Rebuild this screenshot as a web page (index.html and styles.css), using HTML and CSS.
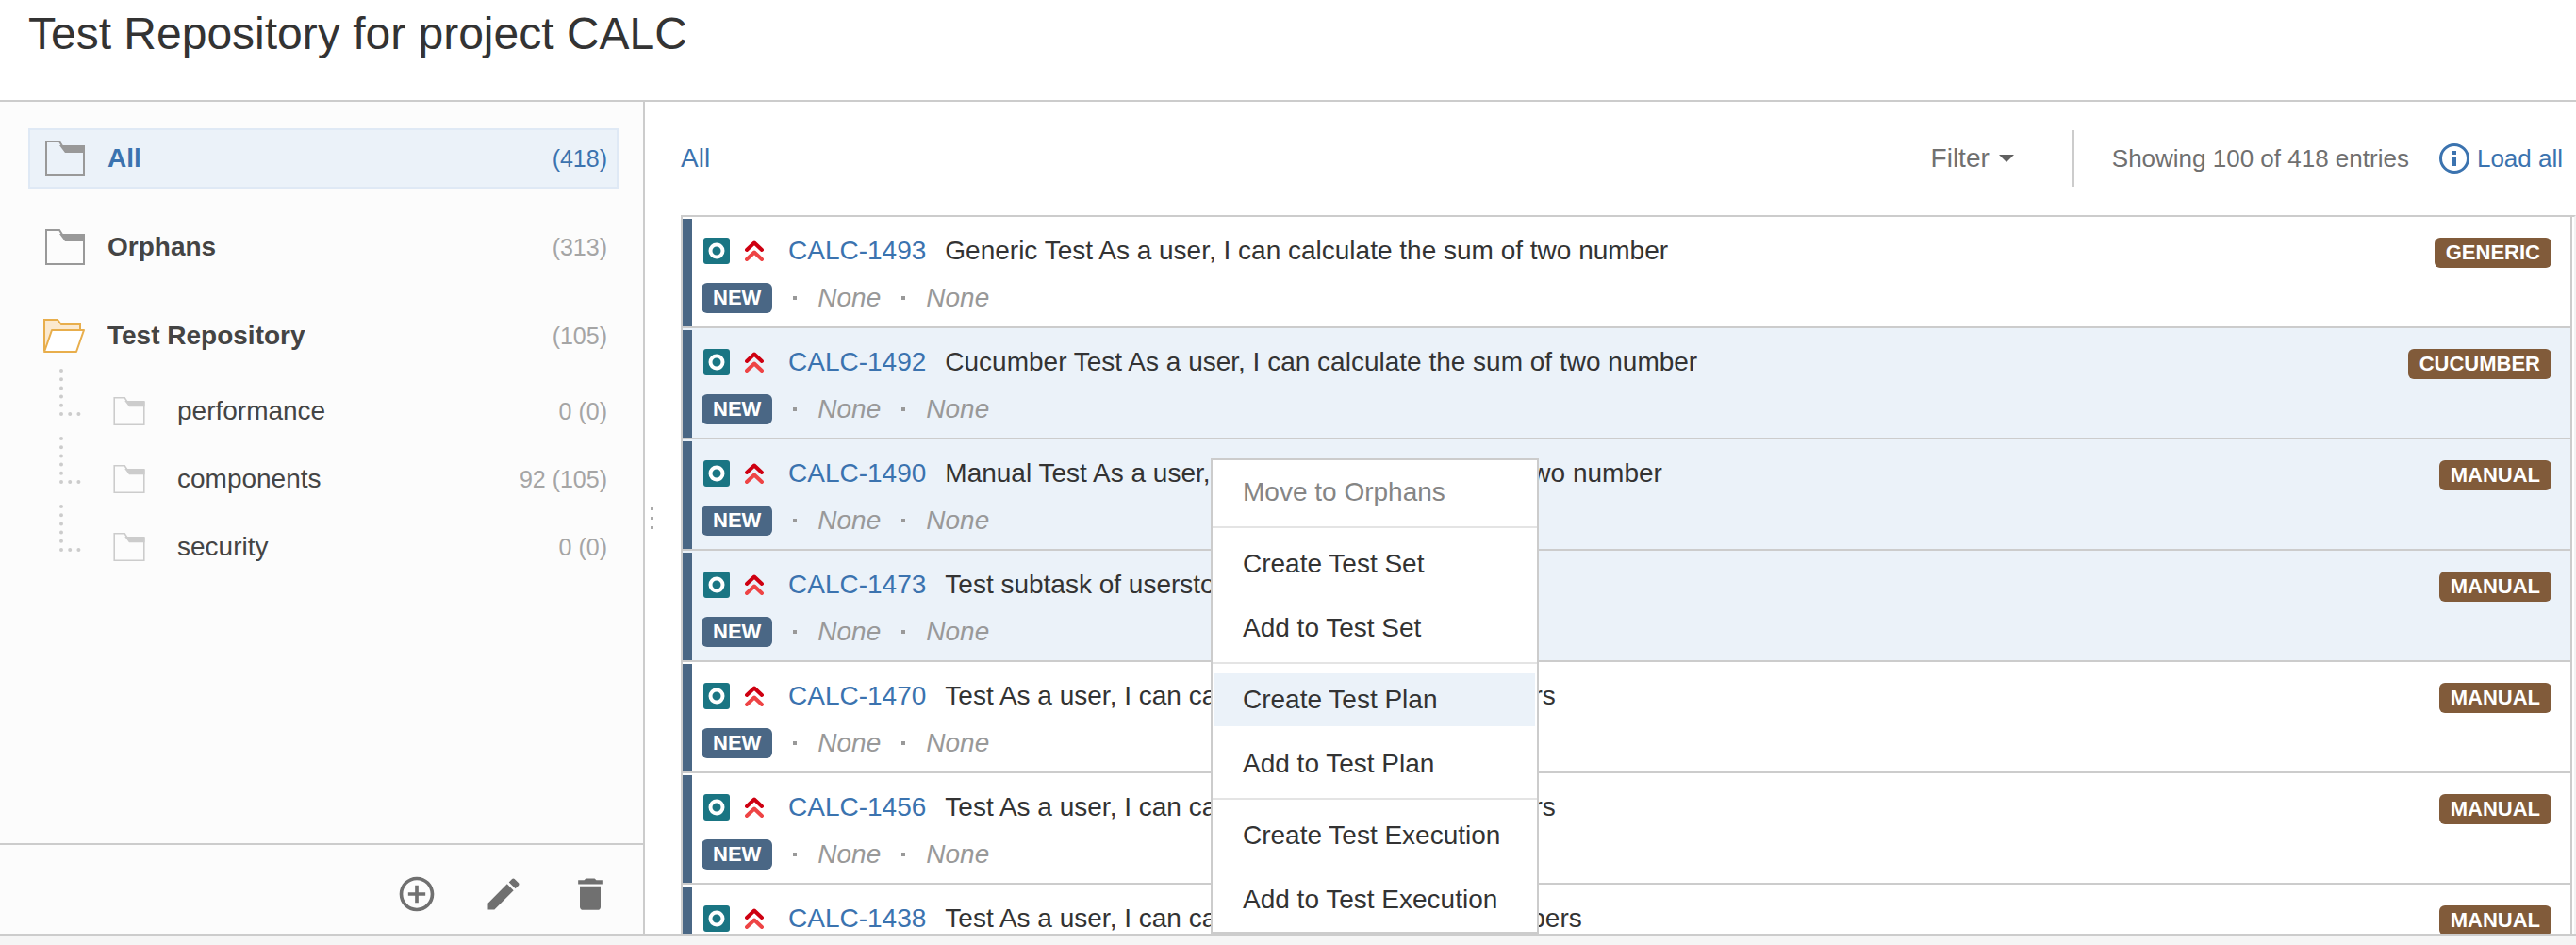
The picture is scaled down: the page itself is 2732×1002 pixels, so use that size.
FILE: index.html
```html
<!DOCTYPE html>
<html lang="en">
<head>
    <meta charset="UTF-8">
    <meta name="viewport" content="width=device-width, initial-scale=1.0">
    <title>Test Repository</title>
    <link rel="stylesheet" href="styles.css">
</head>
<body>
    <!-- shared icons -->
    <svg class="icon-defs" aria-hidden="true">
        <symbol id="icon-folder" viewBox="0 0 42 38">
            <path d="M15 5 H42 V13 H21 Z" fill="currentColor"/>
            <path d="M41 6 V37 H1 V1 H15 L22 12" fill="none" stroke="currentColor" stroke-width="2"/>
        </symbol>
        <symbol id="icon-folder-open" viewBox="0 0 44 36">
            <path d="M1 34 V1 H15 L19 6 H39 V12" fill="#fbe9cf" stroke="#e8ae4c" stroke-width="2"/>
            <path d="M9 12 H43 L35 35 H1 Z" fill="#fff" stroke="#e8ae4c" stroke-width="2" stroke-linejoin="round"/>
        </symbol>
        <symbol id="icon-branch" viewBox="0 0 24 52">
            <path d="M3 3 V49 H23" fill="none" stroke="#ccc" stroke-width="4" stroke-linecap="round" stroke-dasharray="0 9.2"/>
        </symbol>
        <symbol id="icon-test" viewBox="0 0 28 28">
            <rect width="28" height="28" rx="3" fill="#1a7583"/>
            <circle cx="14" cy="14" r="6.5" fill="none" stroke="#fff" stroke-width="4"/>
        </symbol>
        <symbol id="icon-priority" viewBox="0 0 20 22">
            <path d="M2 20 L10 12.5 L18 20" fill="none" stroke="#ee4445" stroke-width="4" stroke-linecap="round" stroke-linejoin="round"/>
            <path d="M2 10 L10 2.5 L18 10" fill="none" stroke="#ce0011" stroke-width="4" stroke-linecap="round" stroke-linejoin="round"/>
        </symbol>
    </svg>

    <header class="page-header">
        <h1>Test Repository for project CALC</h1>
    </header>

    <div class="content">
        <aside class="sidebar">
            <nav class="folders">
                <a href="#" class="folder selected">
                    <svg class="folder-icon"><use href="#icon-folder"/></svg>
                    <span class="folder-name">All</span>
                    <span class="count">(418)</span>
                </a>
                <a href="#" class="folder">
                    <svg class="folder-icon"><use href="#icon-folder"/></svg>
                    <span class="folder-name">Orphans</span>
                    <span class="count">(313)</span>
                </a>
                <a href="#" class="folder">
                    <svg class="folder-icon open"><use href="#icon-folder-open"/></svg>
                    <span class="folder-name">Test Repository</span>
                    <span class="count">(105)</span>
                </a>
                <div class="subfolders">
                    <a href="#" class="subfolder">
                        <svg class="branch"><use href="#icon-branch"/></svg>
                        <svg class="subfolder-icon"><use href="#icon-folder"/></svg>
                        <span class="folder-name">performance</span>
                        <span class="count">0 (0)</span>
                    </a>
                    <a href="#" class="subfolder">
                        <svg class="branch"><use href="#icon-branch"/></svg>
                        <svg class="subfolder-icon"><use href="#icon-folder"/></svg>
                        <span class="folder-name">components</span>
                        <span class="count">92 (105)</span>
                    </a>
                    <a href="#" class="subfolder">
                        <svg class="branch"><use href="#icon-branch"/></svg>
                        <svg class="subfolder-icon"><use href="#icon-folder"/></svg>
                        <span class="folder-name">security</span>
                        <span class="count">0 (0)</span>
                    </a>
                </div>
            </nav>
            <div class="sidebar-tools">
                <button type="button" aria-label="Add folder">
                    <svg width="44" height="44" viewBox="0 0 24 24" fill="currentColor"><path d="M13 7h-2v4H7v2h4v4h2v-4h4v-2h-4V7zm-1-5C6.48 2 2 6.48 2 12s4.480 10 10 10 10-4.480 10-10S17.520 2 12 2zm0 18c-4.410 0-8-3.590-8-8s3.590-8 8-8 8 3.590 8 8-3.590 8-8 8z"/></svg>
                </button>
                <button type="button" aria-label="Edit folder">
                    <svg width="44" height="44" viewBox="0 0 24 24" fill="currentColor"><path d="M3 17.250V21h3.750L17.810 9.940l-3.750-3.750L3 17.250zM20.710 7.040c.39-.39.39-1.020 0-1.410l-2.340-2.340c-.39-.39-1.020-.39-1.410 0l-1.830 1.830 3.750 3.750 1.830-1.830z"/></svg>
                </button>
                <button type="button" aria-label="Delete folder">
                    <svg width="44" height="44" viewBox="0 0 24 24" fill="currentColor"><path d="M6 19.500c0 1.100.9 1.700 1.700 1.700h8.600c1 0 1.700-.7 1.700-1.700V7.500H6v12zM19 4h-3.500l-1-1h-5l-1 1H5v2.300h14V4z"/></svg>
                </button>
            </div>
        </aside>

        <main class="main">
            <div class="splitter"><i></i><i></i><i></i></div>
            <div class="toolbar">
                <a href="#" class="breadcrumb">All</a>
                <button type="button" class="filter">Filter <span class="caret"></span></button>
                <div class="paging">
                    <span>Showing 100 of 418 entries</span>
                    <a href="#" class="load-all">
                        <svg width="32" height="32" viewBox="0 0 32 32" fill="currentColor">
                            <circle cx="16" cy="16" r="14.5" fill="none" stroke="currentColor" stroke-width="3"/>
                            <rect x="14" y="8" width="4" height="4"/>
                            <rect x="14" y="14" width="4" height="10"/>
                        </svg>
                        Load all
                    </a>
                </div>
            </div>

            <ul class="tests">
                <li class="test">
                    <div class="test-body">
                        <div class="test-line">
                            <svg class="test-icon"><use href="#icon-test"/></svg>
                            <svg class="priority-icon"><use href="#icon-priority"/></svg>
                            <a href="#" class="test-key">CALC-1493</a>
                            <span class="summary">Generic Test As a user, I can calculate the sum of two number</span>
                        </div>
                        <div class="test-meta"><span class="badge status">NEW</span><i class="dot"></i><em>None</em><i class="dot"></i><em>None</em></div>
                    </div>
                    <span class="badge type">GENERIC</span>
                </li>
                <li class="test selected">
                    <div class="test-body">
                        <div class="test-line">
                            <svg class="test-icon"><use href="#icon-test"/></svg>
                            <svg class="priority-icon"><use href="#icon-priority"/></svg>
                            <a href="#" class="test-key">CALC-1492</a>
                            <span class="summary">Cucumber Test As a user, I can calculate the sum of two number</span>
                        </div>
                        <div class="test-meta"><span class="badge status">NEW</span><i class="dot"></i><em>None</em><i class="dot"></i><em>None</em></div>
                    </div>
                    <span class="badge type">CUCUMBER</span>
                </li>
                <li class="test selected">
                    <div class="test-body">
                        <div class="test-line">
                            <svg class="test-icon"><use href="#icon-test"/></svg>
                            <svg class="priority-icon"><use href="#icon-priority"/></svg>
                            <a href="#" class="test-key">CALC-1490</a>
                            <span class="summary">Manual Test As a user, I can calculate the sum of two number</span>
                        </div>
                        <div class="test-meta"><span class="badge status">NEW</span><i class="dot"></i><em>None</em><i class="dot"></i><em>None</em></div>
                    </div>
                    <span class="badge type">MANUAL</span>
                </li>
                <li class="test selected">
                    <div class="test-body">
                        <div class="test-line">
                            <svg class="test-icon"><use href="#icon-test"/></svg>
                            <svg class="priority-icon"><use href="#icon-priority"/></svg>
                            <a href="#" class="test-key">CALC-1473</a>
                            <span class="summary">Test subtask of userstory</span>
                        </div>
                        <div class="test-meta"><span class="badge status">NEW</span><i class="dot"></i><em>None</em><i class="dot"></i><em>None</em></div>
                    </div>
                    <span class="badge type">MANUAL</span>
                </li>
                <li class="test">
                    <div class="test-body">
                        <div class="test-line">
                            <svg class="test-icon"><use href="#icon-test"/></svg>
                            <svg class="priority-icon"><use href="#icon-priority"/></svg>
                            <a href="#" class="test-key">CALC-1470</a>
                            <span class="summary">Test As a user, I can calculate the sum of 2 numbers</span>
                        </div>
                        <div class="test-meta"><span class="badge status">NEW</span><i class="dot"></i><em>None</em><i class="dot"></i><em>None</em></div>
                    </div>
                    <span class="badge type">MANUAL</span>
                </li>
                <li class="test">
                    <div class="test-body">
                        <div class="test-line">
                            <svg class="test-icon"><use href="#icon-test"/></svg>
                            <svg class="priority-icon"><use href="#icon-priority"/></svg>
                            <a href="#" class="test-key">CALC-1456</a>
                            <span class="summary">Test As a user, I can calculate the sum of 2 numbers</span>
                        </div>
                        <div class="test-meta"><span class="badge status">NEW</span><i class="dot"></i><em>None</em><i class="dot"></i><em>None</em></div>
                    </div>
                    <span class="badge type">MANUAL</span>
                </li>
                <li class="test">
                    <div class="test-body">
                        <div class="test-line">
                            <svg class="test-icon"><use href="#icon-test"/></svg>
                            <svg class="priority-icon"><use href="#icon-priority"/></svg>
                            <a href="#" class="test-key">CALC-1438</a>
                            <span class="summary">Test As a user, I can calculate the sum of two numbers</span>
                        </div>
                    </div>
                    <span class="badge type">MANUAL</span>
                </li>
            </ul>

            <div class="context-menu">
                <div class="menu-group">
                    <button type="button" disabled>Move to Orphans</button>
                </div>
                <div class="menu-group">
                    <button type="button">Create Test Set</button>
                    <button type="button">Add to Test Set</button>
                </div>
                <div class="menu-group">
                    <button type="button" class="active">Create Test Plan</button>
                    <button type="button">Add to Test Plan</button>
                </div>
                <div class="menu-group">
                    <button type="button">Create Test Execution</button>
                    <button type="button">Add to Test Execution</button>
                </div>
            </div>
        </main>
    </div>

    <footer class="page-footer"></footer>
</body>
</html>
```
FILE: styles.css
```css
* {
    margin: 0;
    padding: 0;
    box-sizing: border-box;
}

body {
    display: flex;
    flex-direction: column;
    height: 100vh;
    overflow: hidden;
    background-color: #fff;
    color: #333;
    font-family: Arial, "Liberation Sans", sans-serif;
    font-size: 28px;
    line-height: 32px;
}

a {
    color: #3b73af;
    text-decoration: none;
}

button {
    border: none;
    background: none;
    color: inherit;
    font: inherit;
    cursor: pointer;
}

svg {
    flex-shrink: 0;
}

.icon-defs {
    position: absolute;
    width: 0;
    height: 0;
}

.page-header {
    flex: none;
    height: 108px;
    padding: 8px 30px;
    border-bottom: 2px solid #ccc;
}

.page-header h1 {
    font-size: 48px;
    font-weight: normal;
    line-height: 56px;
}

.content {
    display: flex;
    flex: 1;
    min-height: 0;
}

.page-footer {
    flex: none;
    height: 12px;
    border-top: 2px solid #ccc;
    background-color: #f5f5f5;
}

/* Sidebar */
.sidebar {
    display: flex;
    flex-direction: column;
    flex: none;
    width: 684px;
    border-right: 2px solid #ccc;
    background-color: #fcfcfc;
}

.folders {
    flex: 1;
    padding: 28px 26px 0 30px;
}

.folder {
    display: flex;
    align-items: center;
    height: 64px;
    margin-bottom: 30px;
    padding: 0 10px 0 16px;
    border: 2px solid transparent;
    color: #444;
    font-weight: bold;
}

.folder.selected {
    border-color: #dfe9f5;
    background-color: #ebf2f9;
    color: #3b73af;
}

.folder-icon {
    width: 42px;
    height: 38px;
    margin-right: 24px;
    color: #999;
}

.folder-icon.open {
    width: 44px;
    height: 36px;
    margin-left: -2px;
}

.folder-name {
    flex: 1;
}

.count {
    color: #a5a5a5;
    font-size: 25px;
    font-weight: normal;
}

.selected .count {
    color: #3b73af;
}

.subfolders {
    margin-top: -18px;
}

.subfolder {
    display: flex;
    align-items: center;
    height: 72px;
    padding: 0 12px 0 32px;
    color: #444;
}

.branch {
    align-self: flex-start;
    width: 24px;
    height: 52px;
    margin-top: -10px;
}

.subfolder-icon {
    width: 34px;
    height: 30px;
    margin: 0 34px;
    color: #ccc;
}

.sidebar-tools {
    display: flex;
    flex: none;
    justify-content: flex-end;
    align-items: center;
    gap: 48px;
    height: 96px;
    padding: 10px 34px 0;
    border-top: 2px solid #ccc;
    color: #707070;
}

.sidebar-tools button {
    display: flex;
}

/* Main panel */
.main {
    position: relative;
    flex: 1;
    display: flex;
    flex-direction: column;
    min-width: 0;
    padding-left: 38px;
}

.splitter {
    position: absolute;
    top: 430px;
    left: 6px;
    display: flex;
    flex-direction: column;
    gap: 7px;
}

.splitter i {
    width: 3px;
    height: 3px;
    background-color: #aaa;
}

.toolbar {
    display: flex;
    align-items: center;
    flex: none;
    height: 120px;
    padding-right: 14px;
    color: #707070;
}

.breadcrumb {
    flex: 1;
}

.filter {
    display: flex;
    align-items: center;
    gap: 10px;
    margin-right: 62px;
}

.caret {
    border: 8px solid transparent;
    border-top-color: #606060;
    border-bottom: none;
}

.paging {
    display: flex;
    align-items: center;
    gap: 32px;
    height: 60px;
    padding-left: 40px;
    border-left: 2px solid #ccc;
    font-size: 26px;
}

.load-all {
    display: flex;
    align-items: center;
    gap: 8px;
}

.tests {
    flex: 1;
    min-height: 0;
    overflow: hidden;
    padding-right: 2px;
    border-top: 2px solid #ccc;
    border-right: 2px solid #f3f3f3;
    list-style: none;
}

.test {
    display: flex;
    align-items: flex-start;
    height: 118px;
    padding: 2px 20px 0 0;
    border: 2px solid #ccc;
    border-top: none;
}

.test.selected {
    background-color: #ebf2f9;
}

.test-body {
    flex: 1;
    height: 114px;
    padding: 18px 0 0 10px;
    border-left: 10px solid #4a6785;
}

.test-line {
    display: flex;
    align-items: center;
    padding-left: 2px;
}

.test-icon {
    width: 28px;
    height: 28px;
}

.priority-icon {
    width: 20px;
    height: 22px;
    margin: 0 26px 0 16px;
}

.summary {
    margin-left: 20px;
}

.test-meta {
    display: flex;
    align-items: center;
    margin-top: 18px;
    color: #999;
}

.dot {
    width: 4px;
    height: 4px;
    margin: 0 22px;
    background-color: #999;
}

.badge {
    padding: 0 12px;
    border-radius: 6px;
    color: #fff;
    font-size: 22px;
    font-weight: bold;
}

.badge.status {
    background-color: #4a6785;
}

.badge.type {
    margin-top: 20px;
    background-color: #815b3a;
}

/* Context menu */
.context-menu {
    position: absolute;
    top: 378px;
    left: 600px;
    width: 348px;
    border: 2px solid #ccc;
    background-color: #fff;
}

.menu-group {
    display: flex;
    flex-direction: column;
    gap: 12px;
    padding: 10px 2px 8px;
    border-top: 2px solid #e4e4e4;
}

.menu-group:first-child {
    padding-top: 6px;
    border-top: none;
}

.menu-group:last-child {
    padding-bottom: 6px;
}

.menu-group button {
    height: 56px;
    padding: 0 30px;
    color: #333;
    text-align: left;
}

.menu-group button.active {
    background-color: #ebf2f9;
}

.menu-group button:disabled {
    color: #858585;
}
```
